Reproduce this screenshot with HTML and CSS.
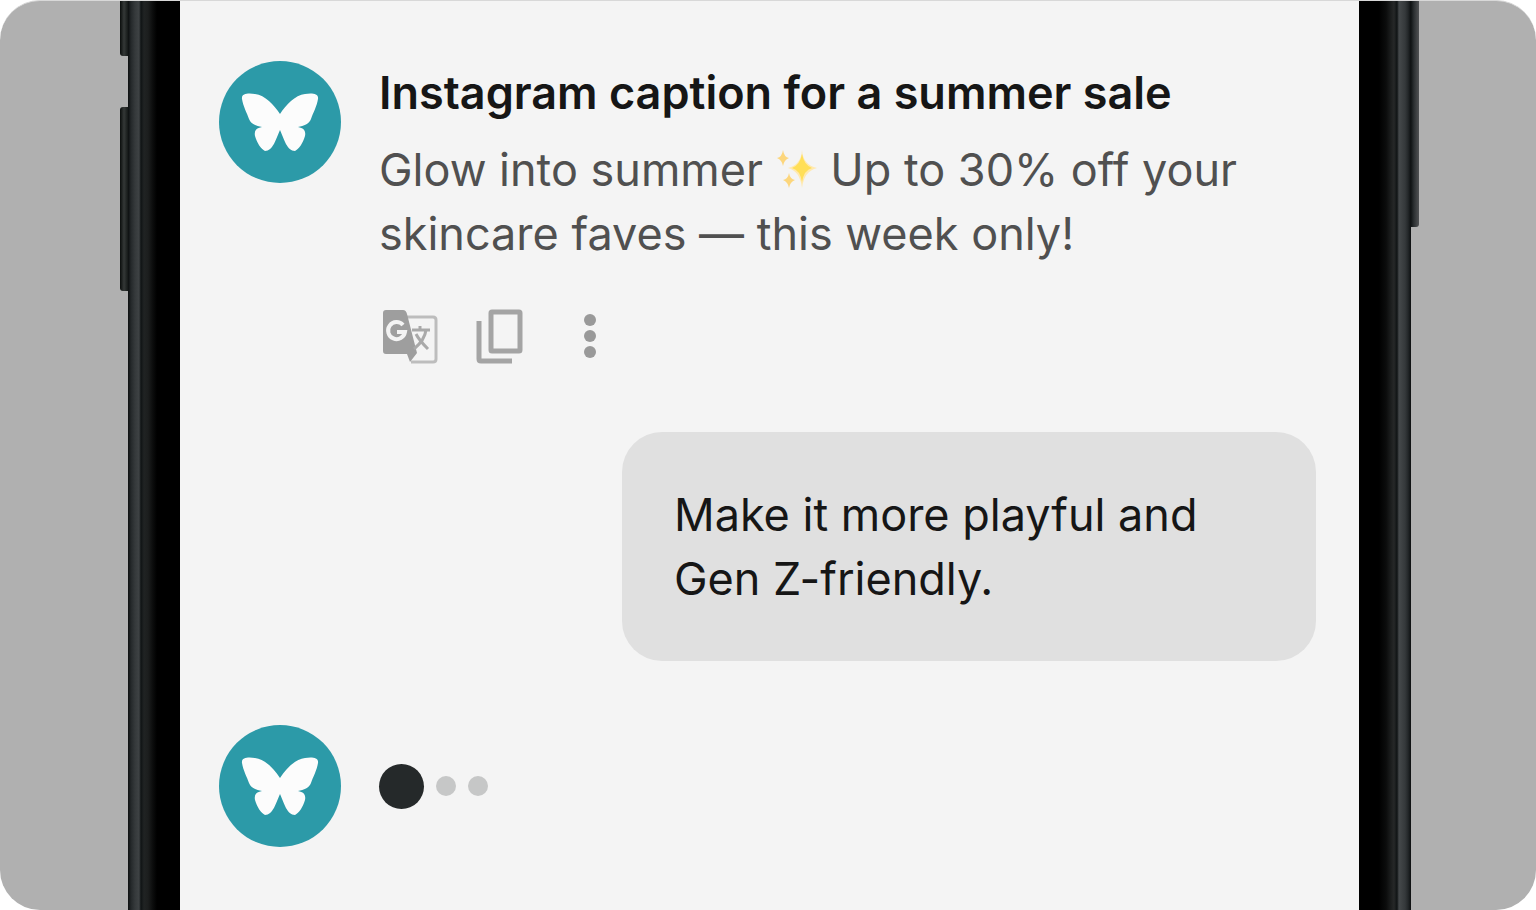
FILE: index.html
```html
<!DOCTYPE html>
<html lang="en">
<head>
<meta charset="utf-8">
<meta name="viewport" content="width=device-width, initial-scale=1">
<title>Caption assistant</title>
<link rel="stylesheet" href="styles.css">
</head>
<body>
<svg class="defs" aria-hidden="true">
  <symbol id="butterfly" viewBox="0 0 122 122">
    <path d="M61 53C55 44 46 34 36 33C30 32 22 32 23 38C24 45 28 52 30 58C32 63 37 65 43 66C37 67 35 70 36 75C38 82 42 88 46 90C54 90 57 78 61 69C65 78 68 90 76 90C80 88 84 82 86 75C87 70 85 67 79 66C85 65 90 63 92 58C94 52 98 45 99 38C100 32 92 32 86 33C76 34 67 44 61 53Z"/>
  </symbol>
</svg>
<div class="stage">
  <div class="phone">
    <span class="key key-mute"></span>
    <span class="key key-volume"></span>
    <span class="key key-power"></span>
    <div class="rail rail-left"></div>
    <main class="screen">
      <article class="message">
        <svg class="avatar" role="img" aria-label="Assistant"><use href="#butterfly"/></svg>
        <div class="content">
          <h1 class="title">Instagram caption for a summer sale</h1>
          <p class="text">Glow into summer <svg class="sparkles" viewBox="0 0 42 42" aria-hidden="true"><path fill="#ffe9b0" d="M26 2Q27 17 41 20Q28 23 26 40Q24 23 12 20Q25 17 26 2Z"/><path fill="#ffdf58" d="M26 6Q28 17 36 20Q28 22 26 34Q24 22 16 20Q24 17 26 6Z"/><path fill="#fcd67c" d="M7 2Q8 9 13 10Q8 12 7 18Q6 12 1 10Q6 9 7 2ZM13 25Q14 31 19 32Q14 34 13 40Q12 34 7 32Q12 31 13 25Z"/></svg> Up to 30% off your skincare faves — this week only!</p>
          <div class="actions">
            <button class="action" type="button" aria-label="Translate">
              <svg class="icon" viewBox="0 0 56 56"><path fill="none" stroke="#bdbdbd" stroke-width="3" d="M24 9H51Q54 9 54 12V51Q54 54 51 54H29"/><path fill="#9e9e9e" d="M4 2H21Q24 2 25 6L35 45L28 54L25 46H4Q1 46 1 43V5Q1 2 4 2Z"/><path fill="none" stroke="#f3f3f3" stroke-width="4" d="M21 17A8.500 8.500 0 1 0 23 24H15"/><path fill="none" stroke="#a9a9a9" stroke-width="3" d="M30 22H48M38 18V22M44 22C43 30 38 36 32 41M34 26C37 32 42 37 46 41"/></svg>
            </button>
            <button class="action" type="button" aria-label="Copy">
              <svg class="icon" viewBox="0 0 56 56"><path fill="none" stroke="#a4a4a4" stroke-width="5" d="M20 4H47Q48 4 48 5V42Q48 43 47 43H20Q19 43 19 42V5Q19 4 20 4ZM7 13V51Q7 53 9 53H40"/></svg>
            </button>
            <button class="action" type="button" aria-label="More options">
              <svg class="icon" viewBox="0 0 56 56" fill="#999"><circle cx="28" cy="12" r="6"/><circle cx="28" cy="28" r="6"/><circle cx="28" cy="44" r="6"/></svg>
            </button>
          </div>
        </div>
      </article>
      <p class="bubble">Make it more playful and Gen Z-friendly.</p>
      <article class="message">
        <svg class="avatar" role="img" aria-label="Assistant"><use href="#butterfly"/></svg>
        <div class="typing" role="status" aria-label="Typing">
          <span class="dot dot-active"></span><span class="dot"></span><span class="dot"></span>
        </div>
      </article>
    </main>
    <div class="rail rail-right"></div>
  </div>
</div>
</body>
</html>
```
FILE: styles.css
```css
* { box-sizing: border-box; }
body {
  margin: 0;
  background: #fff;
  font-family: Inter, "Liberation Sans", sans-serif;
  font-size: 45px;
  line-height: 64px;
}
.defs { position: absolute; width: 0; height: 0; }
.stage {
  display: flex;
  min-height: 100vh;
  padding: 0 125px 0 128px;
  border-radius: 40px;
  border-top: 1px solid #d8d8d8;
  background: #b0b0b0;
}
.phone { position: relative; display: flex; flex: 1; }
.rail { flex: none; width: 52px; }
.rail-left { background: linear-gradient(90deg, #0c0f10 0, #24282a 3px, #35393b 7px, #3e4244 11px, #101415 13px, #202323 16px, #1c1e1e 20px, #0b0c0c 25px, #000 29px); }
.rail-right { background: linear-gradient(270deg, #0c0f10 0, #24282a 3px, #35393b 6px, #45494b 12px, #101415 14px, #262828 17px, #1c1e1e 20px, #0b0c0c 25px, #000 32px); }
.key { position: absolute; width: 8px; background: linear-gradient(90deg, #0a0d0c, #343837 4px, #151918); }
.key-mute { left: -8px; top: 0; height: 55px; border-bottom-left-radius: 3px; }
.key-volume { left: -8px; top: 106px; height: 184px; border-radius: 3px 0 0 3px; }
.key-power { right: -8px; top: 0; height: 226px; border-bottom-right-radius: 3px; background: linear-gradient(90deg, #101415, #2c3032 3px, #505254); }
.screen {
  display: flex;
  flex: 1;
  flex-direction: column;
  min-width: 0;
  padding: 60px 43px 59px 39px;
  background: #f4f4f4;
}
.message { display: flex; align-items: flex-start; gap: 38px; }
.avatar { flex: none; width: 122px; height: 122px; border-radius: 50%; background: #2c9aa8; fill: #fcfcfc; }
.content { flex: 1; min-width: 0; }
.title { margin: 0 0 13px; font-size: 45px; font-weight: 600; line-height: 64px; color: #161616; }
.text { margin: 0; color: #505050; }
.sparkles { width: 42px; height: 42px; vertical-align: -4px; }
.actions { display: flex; gap: 34px; margin-top: 42px; padding-left: 3px; }
.action { padding: 0; border: 0; background: none; cursor: pointer; }
.icon { display: block; width: 56px; height: 56px; }
.bubble {
  align-self: flex-end;
  max-width: 694px;
  margin: 68px 0 64px;
  padding: 51px 52px 50px;
  border-radius: 40px;
  background: #e0e0e0;
  color: #161616;
}
.typing { display: flex; align-items: center; gap: 12px; height: 122px; }
.dot { width: 20px; height: 20px; border-radius: 50%; background: #c6c7c7; }
.dot-active { width: 45px; height: 45px; background: #25292a; }
```
